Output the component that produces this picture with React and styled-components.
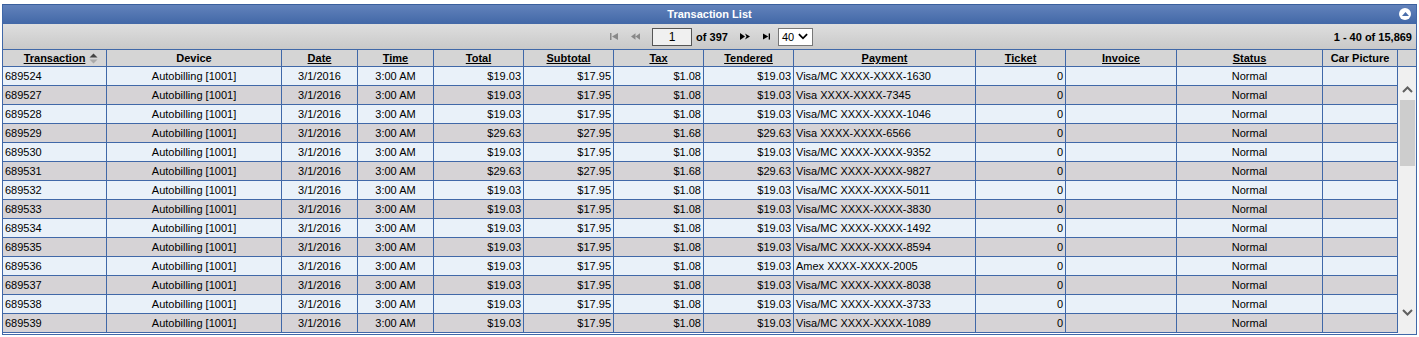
import React from "react";
import styled, { createGlobalStyle } from "styled-components";

const GlobalStyle = createGlobalStyle`
  html, body { margin: 0; padding: 0; background: #fff; }
  body { font-family: "Liberation Sans", Arial, sans-serif; font-size: 11px; color: #000; }
`;

const COLUMNS = "104px 175px 76px 76px 90px 90px 90px 90px 182px 90px 111px 146px 75px";
const LINE = "#4068a8";

const Widget = styled.div`
  box-sizing: border-box;
  width: 1415px;
  margin: 4px 0 0 2px;
  border: 1px solid ${LINE};
  border-top-color: #3a5f9c;
`;

const TitleBar = styled.div`
  position: relative;
  height: 19px;
  line-height: 19px;
  text-align: center;
  color: #fff;
  font-weight: bold;
  background: linear-gradient(#6282bb, #4268a7);
`;

const CollapseButton = styled.span`
  position: absolute;
  right: 5px;
  top: 3px;
  width: 12px;
  height: 12px;
  border-radius: 50%;
  background: #fff;
  display: flex;
  align-items: center;
  justify-content: center;
`;

const Toolbar = styled.div`
  height: 25px;
  display: grid;
  grid-template-columns: 1fr auto 1fr;
  align-items: center;
  background: linear-gradient(#dedede, #c9c9c9);
`;

const Pager = styled.div`
  grid-column: 2;
  display: flex;
  align-items: center;
  font-weight: bold;
  font-size: 11px;
  padding-left: 4px;
`;

const PagerButton = styled.span`
  display: inline-flex;
  align-items: center;
  margin-left: ${({ gap }) => gap}px;
  opacity: ${({ disabled }) => (disabled ? 0.35 : 1)};
`;

const PageInput = styled.span`
  box-sizing: border-box;
  width: 40px;
  height: 18px;
  margin-left: 12px;
  margin-right: 4px;
  border: 1px solid #555;
  background: #f0f0f0;
  text-align: center;
  line-height: 16px;
  font-weight: normal;
  font-size: 12px;
`;

const PageSize = styled.span`
  box-sizing: border-box;
  display: inline-flex;
  align-items: center;
  gap: 4px;
  width: 35px;
  height: 18px;
  margin-left: 8px;
  padding-left: 3px;
  border: 1px solid #777;
  background: #fff;
  font-weight: normal;
  font-size: 11px;
`;

const Count = styled.div`
  justify-self: end;
  padding-right: 4px;
  font-weight: bold;
`;

const HeaderRow = styled.div`
  display: grid;
  grid-template-columns: ${COLUMNS} 18px;
  border-top: 1px solid ${LINE};
  border-bottom: 1px solid ${LINE};
  background: #d5d5d5;
`;

const HeaderCell = styled.div`
  box-sizing: border-box;
  height: 16px;
  line-height: 16px;
  font-weight: bold;
  border-right: ${({ last }) => (last ? "none" : `1px solid ${LINE}`)};
  text-decoration: ${({ sortable }) => (sortable ? "underline" : "none")};
  display: flex;
  justify-content: center;
  align-items: center;
`;

const SortMark = styled.span`
  display: inline-flex;
  margin-left: 4px;
  margin-right: -13px;
`;

const Body = styled.div`
  display: flex;
  height: 267px;
`;

const Rows = styled.div`
  display: flex;
  flex-direction: column;
`;

const Row = styled.div`
  display: grid;
  grid-template-columns: ${COLUMNS};
  background: ${({ alt }) => (alt ? "#d6d3d6" : "#e9f1f9")};
`;

const Cell = styled.div`
  box-sizing: border-box;
  height: 19px;
  line-height: 18px;
  padding: 0 2px;
  white-space: nowrap;
  overflow: hidden;
  text-align: ${({ align }) => align || "left"};
  border-right: 1px solid ${LINE};
  border-bottom: 1px solid ${LINE};
`;

const Scrollbar = styled.div`
  width: 18px;
  background: #f0f0f0;
  display: flex;
  flex-direction: column;
  align-items: center;
`;

const ScrollArrow = styled.div`
  height: 14px;
  display: flex;
  align-items: center;
  justify-content: center;
  margin-top: ${({ top }) => top}px;
  margin-bottom: ${({ bottom }) => bottom || 0}px;
`;

const Thumb = styled.div`
  width: 15px;
  height: 66px;
  margin-top: 4px;
  background: #cdcdcd;
`;

const Spacer = styled.div`
  flex: 1;
`;

const headers = [
  { label: "Transaction", sortable: true, sort: true },
  { label: "Device" },
  { label: "Date", sortable: true },
  { label: "Time", sortable: true },
  { label: "Total", sortable: true },
  { label: "Subtotal", sortable: true },
  { label: "Tax", sortable: true },
  { label: "Tendered", sortable: true },
  { label: "Payment", sortable: true },
  { label: "Ticket", sortable: true },
  { label: "Invoice", sortable: true },
  { label: "Status", sortable: true },
  { label: "Car Picture" },
];

const data = [
  ["689524", "19.03", "17.95", "1.08", "Visa/MC XXXX-XXXX-1630"],
  ["689527", "19.03", "17.95", "1.08", "Visa XXXX-XXXX-7345"],
  ["689528", "19.03", "17.95", "1.08", "Visa/MC XXXX-XXXX-1046"],
  ["689529", "29.63", "27.95", "1.68", "Visa XXXX-XXXX-6566"],
  ["689530", "19.03", "17.95", "1.08", "Visa/MC XXXX-XXXX-9352"],
  ["689531", "29.63", "27.95", "1.68", "Visa/MC XXXX-XXXX-9827"],
  ["689532", "19.03", "17.95", "1.08", "Visa/MC XXXX-XXXX-5011"],
  ["689533", "19.03", "17.95", "1.08", "Visa/MC XXXX-XXXX-3830"],
  ["689534", "19.03", "17.95", "1.08", "Visa/MC XXXX-XXXX-1492"],
  ["689535", "19.03", "17.95", "1.08", "Visa/MC XXXX-XXXX-8594"],
  ["689536", "19.03", "17.95", "1.08", "Amex XXXX-XXXX-2005"],
  ["689537", "19.03", "17.95", "1.08", "Visa/MC XXXX-XXXX-8038"],
  ["689538", "19.03", "17.95", "1.08", "Visa/MC XXXX-XXXX-3733"],
  ["689539", "19.03", "17.95", "1.08", "Visa/MC XXXX-XXXX-1089"],
];

const SortIcon = () => (
  <svg width="9" height="11" viewBox="0 0 9 11">
    <path d="M0.5 4.5 L4.5 0.5 L8.5 4.5 Z" fill="#444" />
    <path d="M0.5 6.5 L4.5 10.5 L8.5 6.5 Z" fill="#aaa" />
  </svg>
);

const FirstIcon = () => (
  <svg width="8" height="7" viewBox="0 0 8 7">
    <rect x="0" y="0" width="1.5" height="7" fill="#000" />
    <path d="M8 0 L2 3.5 L8 7 Z" fill="#000" />
  </svg>
);

const PrevIcon = () => (
  <svg width="9" height="7" viewBox="0 0 10 7">
    <path d="M5 0 L0 3.5 L5 7 Z M10 0 L5 3.5 L10 7 Z" fill="#000" />
  </svg>
);

const NextIcon = () => (
  <svg width="10" height="7" viewBox="0 0 10 7">
    <path d="M0 0 L5 3.5 L0 7 Z" fill="#000" />
    <path d="M5 0.5 L10 3.5 L5 6.5 L6.5 3.5 Z" fill="#000" />
  </svg>
);

const LastIcon = () => (
  <svg width="7" height="7" viewBox="0 0 8 7">
    <path d="M0 0 L6 3.5 L0 7 Z" fill="#000" />
    <rect x="6.5" y="0" width="1.5" height="7" fill="#000" />
  </svg>
);

const Chevron = ({ up, color = "#000", w = 11, h = 7 }) => (
  <svg width={w} height={h} viewBox="0 0 11 7">
    <path
      d={up ? "M1 6 L5.5 1.5 L10 6" : "M1 1 L5.5 5.5 L10 1"}
      fill="none"
      stroke={color}
      strokeWidth="2"
    />
  </svg>
);

export default function App() {
  return (
    <>
      <GlobalStyle />
      <Widget>
        <TitleBar>
          Transaction List
          <CollapseButton>
            <svg width="7" height="4" viewBox="0 0 7 4">
              <path d="M0 4 L3.5 0 L7 4 Z" fill="#4a6eab" />
            </svg>
          </CollapseButton>
        </TitleBar>
        <Toolbar>
          <Pager>
            <PagerButton disabled gap={0}><FirstIcon /></PagerButton>
            <PagerButton disabled gap={13}><PrevIcon /></PagerButton>
            <PageInput>1</PageInput>
            of 397
            <PagerButton gap={12}><NextIcon /></PagerButton>
            <PagerButton gap={13}><LastIcon /></PagerButton>
            <PageSize>
              40 <Chevron w={10} h={7} />
            </PageSize>
          </Pager>
          <Count>1 - 40 of 15,869</Count>
        </Toolbar>
        <HeaderRow>
          {headers.map((h) => (
            <HeaderCell key={h.label} sortable={h.sortable}>
              {h.label}
              {h.sort && (
                <SortMark>
                  <SortIcon />
                </SortMark>
              )}
            </HeaderCell>
          ))}
          <HeaderCell last />
        </HeaderRow>
        <Body>
          <Rows>
            {data.map(([id, total, sub, tax, pay], i) => (
              <Row key={id} alt={i % 2 === 1}>
                <Cell>{id}</Cell>
                <Cell align="center">Autobilling [1001]</Cell>
                <Cell align="center">3/1/2016</Cell>
                <Cell align="center">3:00 AM</Cell>
                <Cell align="right">${total}</Cell>
                <Cell align="right">${sub}</Cell>
                <Cell align="right">${tax}</Cell>
                <Cell align="right">${total}</Cell>
                <Cell>{pay}</Cell>
                <Cell align="right">0</Cell>
                <Cell />
                <Cell align="center">Normal</Cell>
                <Cell />
              </Row>
            ))}
          </Rows>
          <Scrollbar>
            <ScrollArrow top={15}><Chevron up color="#606060" /></ScrollArrow>
            <Thumb />
            <Spacer />
            <ScrollArrow top={0} bottom={15}><Chevron color="#606060" /></ScrollArrow>
          </Scrollbar>
        </Body>
      </Widget>
    </>
  );
}
